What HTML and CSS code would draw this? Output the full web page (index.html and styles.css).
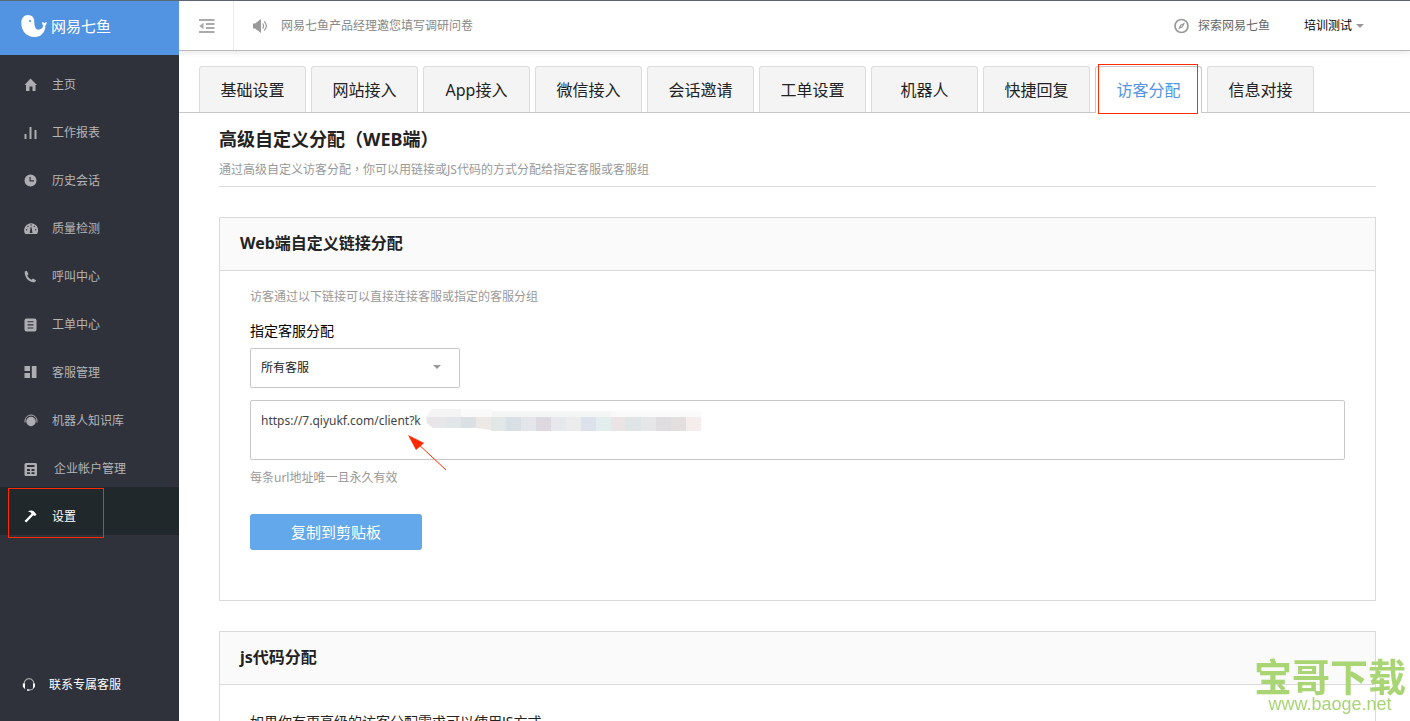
FILE: index.html
```html
<!DOCTYPE html>
<html lang="zh-CN">
<head>
<meta charset="utf-8">
<title>网易七鱼 - 访客分配</title>
<link rel="stylesheet" href="styles.css">
</head>
<body>
<div class="app">
  <aside class="sidebar">
    <a class="logo" href="#">
      <svg width="26" height="24" viewBox="0 0 26 24"><path fill="#fff" d="M7 1C11 1 13.300 3.800 13.300 7.500C13.300 11.500 14 15.700 17.500 15.700C20 15.700 21.800 14 22.300 11.600C21.200 10.700 20.900 9.300 21.300 8C22.400 8.200 23 8.600 23.500 9.200C24 8.400 24.700 8.100 25.500 8C25.800 9.600 25.300 11 24.300 11.700C24.600 18 20 23 13.500 23C6 23 0.300 17.500 0.300 9C0.300 4.300 3 1 7 1Z"/><circle cx="9" cy="7" r="1.100" fill="#5294e2"/></svg>
      <span>网易七鱼</span>
    </a>
    <nav class="menu">
      <a class="menu-item" href="#"><svg viewBox="0 0 14 14"><path d="M6.500 0.500L13 7H11.500V13H8.500V8.500H5.500V13H2V7H0.500Z"/></svg>主页</a>
      <a class="menu-item" href="#"><svg viewBox="0 0 14 14"><path d="M0.500 8H2.500V13H0.500ZM5.500 1H7.500V13H5.500ZM10.500 4H12.500V13H10.500Z"/></svg>工作报表</a>
      <a class="menu-item" href="#"><svg viewBox="0 0 14 14"><path fill-rule="evenodd" d="M6.500 0.500A6 6 0 1 1 6.500 12.500A6 6 0 1 1 6.500 0.500ZM5.500 3V7.500H10V6.300H6.700V3Z"/></svg>历史会话</a>
      <a class="menu-item" href="#"><svg viewBox="0 0 14 14"><path d="M1.200 12A7 7 0 1 1 13 12Z"/><path class="cut" d="M6.700 5H7.500L8.500 11H5.700Z"/><circle class="cut" cx="7.100" cy="3" r="0.700"/><circle class="cut" cx="4" cy="4.400" r="0.700"/><circle class="cut" cx="10.200" cy="4.400" r="0.700"/><circle class="cut" cx="2.500" cy="7.800" r="0.700"/><circle class="cut" cx="11.700" cy="7.800" r="0.700"/></svg>质量检测</a>
      <a class="menu-item" href="#"><svg viewBox="0 0 14 14"><path d="M0.700 1.500L2.800 0.700L4.500 4L3.300 5.600C4.200 7.500 5.500 8.800 7.500 9.800L9 8.500L12 10.300C11.800 12 10.500 12.500 9 12.300C4 11.500 0.500 7 0.700 1.500Z"/></svg>呼叫中心</a>
      <a class="menu-item" href="#"><svg viewBox="0 0 14 14"><rect x="0.500" y="0.500" width="12" height="13" rx="2"/><path class="cut" d="M3.500 3.200H9.500V4.300H3.500ZM3.500 6.300H9.500V7.400H3.500ZM3.500 9.400H9.500V10.500H3.500Z"/></svg>工单中心</a>
      <a class="menu-item" href="#"><svg viewBox="0 0 14 14"><path d="M0.500 0H6V5H0.500ZM0.500 7H6V12H0.500ZM7.800 0H12.500V12H7.800Z"/></svg>客服管理</a>
      <a class="menu-item" href="#"><svg viewBox="0 0 14 14"><circle cx="7" cy="7.500" r="4.700"/><path class="line" d="M1 8.500V7A6 6 0 0 1 13 7V8.500"/></svg>机器人知识库</a>
      <a class="menu-item wide" href="#"><svg viewBox="0 0 14 14"><rect x="0.500" y="1" width="12.500" height="13" rx="1.500"/><path class="cut" d="M3 3H10.500V5H3ZM3 7H6V9H3ZM7.500 7H10.500V9H7.500ZM3 10.300H6V12H3ZM7.500 10.300H10.500V12H7.500Z"/></svg>企业帐户管理</a>
      <a class="menu-item active" href="#"><svg viewBox="0 0 14 14"><path d="M4 1.500C6 0 8.500 0.200 10 1.600L12.500 4.500L11 6L9.300 5.200L2.300 12.500L0.500 11L7.500 3.800L6.500 2.300Z"/></svg>设置<span class="mark mark-menu"></span></a>
    </nav>
    <a class="contact" href="#"><svg viewBox="0 0 14 14"><path d="M2.200 6V5.500A4.800 4.800 0 0 1 11.800 5.500V6M11.800 9C11.500 10.500 10.500 12 7.500 12M2 9L3 11" fill="none" stroke="#a9abad" stroke-width="1.200"/><path d="M0.800 5.500H3V10H2L0.800 8.500ZM11 5.500H13V8.500L12 10H11ZM5 11.300H7.500V12.700H5Z" fill="#fff"/></svg>联系专属客服</a>
  </aside>

  <div class="main">
    <header class="topbar">
      <button class="toggle" type="button" aria-label="收起菜单"><svg width="16" height="14" viewBox="0 0 16 14"><path fill="#aaa" d="M0 0H15.500V2H0ZM7 4H15.500V6H7ZM7 8H15.500V10H7ZM0 12H15.500V14H0ZM4.500 3.800V10.200L0.300 7Z"/></svg></button>
      <a class="notice" href="#"><svg width="16" height="14" viewBox="0 0 16 14"><path fill="#999" d="M0 4.500H2L8 0V14L2 9.500H0Z"/><path fill="none" stroke="#999" stroke-width="1.200" d="M9.700 4.500Q11.300 7 9.700 9.500M11.300 2.500Q15.500 7 11.300 11.500"/></svg>网易七鱼产品经理邀您填写调研问卷</a>
      <a class="explore" href="#"><svg width="16" height="16" viewBox="0 0 16 16"><circle cx="7.500" cy="8" r="6.500" fill="none" stroke="#999" stroke-width="1.700"/><path fill="#999" fill-rule="evenodd" d="M11 4.500L8.700 9.200L4 11.500L6.300 6.800ZM7.500 7.200L6.700 8L7.500 8.800L8.300 8Z"/></svg>探索网易七鱼</a>
      <button class="account" type="button">培训测试<span class="caret"></span></button>
    </header>

    <nav class="tabs">
      <a class="tab" href="#">基础设置</a>
      <a class="tab" href="#">网站接入</a>
      <a class="tab" href="#">App接入</a>
      <a class="tab" href="#">微信接入</a>
      <a class="tab" href="#">会话邀请</a>
      <a class="tab" href="#">工单设置</a>
      <a class="tab" href="#">机器人</a>
      <a class="tab" href="#">快捷回复</a>
      <a class="tab current" href="#">访客分配<span class="mark mark-tab"></span></a>
      <a class="tab" href="#">信息对接</a>
    </nav>

    <main class="content">
      <div class="page-head">
        <h1>高级自定义分配<span class="punct" lang="zh-TW">（</span>WEB端<span class="punct" lang="zh-TW">）</span></h1>
        <p>通过高级自定义访客分配<span class="punct" lang="zh-TW">，</span>你可以用链接或JS代码的方式分配给指定客服或客服组</p>
      </div>

      <section class="card">
        <h2>Web端自定义链接分配</h2>
        <div class="card-body">
          <p class="muted">访客通过以下链接可以直接连接客服或指定的客服分组</p>
          <label class="field-label" for="agent">指定客服分配</label>
          <div class="select">
            <select id="agent"><option>所有客服</option></select>
            <span class="caret"></span>
          </div>
          <div class="url-box">
            <textarea aria-label="链接地址" readonly>https://7.qiyukf.com/client?k</textarea>
            <svg class="mosaic" width="277" height="24" viewBox="0 0 277 24">
              <path fill="#f4f4f4" d="M6 1H35V9H0Z"/><path fill="#fbfafa" d="M35 1H66V9H35Z"/><path fill="#f4f5f5" d="M66 3H185V9H66Z"/><path fill="#fafafb" d="M185 3H275V9H185Z"/>
              <path fill="#e8e6e8" d="M0 9H20V20H7L1 15Z"/>
              <path fill="#e1e6e9" d="M20 9H35V20H20Z"/><path fill="#dae1e4" d="M35 9H50V20H35Z"/><path fill="#ece8e5" d="M50 9H65V22L50 20Z"/>
              <path fill="#e1e6e6" d="M65 9H80V23H65Z"/><path fill="#d9e0e5" d="M80 9H95V23H80Z"/><path fill="#e3e5e8" d="M95 9H110V23H95Z"/><path fill="#ded9de" d="M110 9H125V23H110Z"/><path fill="#e7e8eb" d="M125 9H140V23H125Z"/><path fill="#ececef" d="M140 9H155V23H140Z"/><path fill="#dce1eb" d="M155 9H170V23H155Z"/><path fill="#e3eded" d="M170 9H185V23H170Z"/><path fill="#ebe4e5" d="M185 9H200V23H185Z"/><path fill="#dfe5e6" d="M200 9H215V23H200Z"/><path fill="#e6e6e8" d="M215 9H230V23H215Z"/><path fill="#dfdddf" d="M230 9H245V23H230Z"/><path fill="#e3dfde" d="M245 9H260V23H245Z"/><path fill="#f4edeb" d="M260 9H275V23H260Z"/>
            </svg>
            <svg class="arrow" width="40" height="36" viewBox="0 0 40 36"><path stroke="#ff2a00" d="M8 7L38 35"/><path fill="#ff2a00" d="M0 0L16 8L8 15Z"/></svg>
          </div>
          <p class="muted hint">每条url地址唯一且永久有效</p>
          <button class="copy" type="button">复制到剪贴板</button>
        </div>
      </section>

      <section class="card">
        <h2>js代码分配</h2>
        <div class="card-body lead">
          <p>如果你有更高级的访客分配需求可以使用JS方式</p>
        </div>
      </section>
    </main>
  </div>
</div>
<div class="watermark"><strong>宝哥下载</strong><span>www.baoge.net</span></div>
</body>
</html>
```
FILE: styles.css
```css
* { box-sizing: border-box; }

body {
  margin: 0;
  font: 12px/20px "Noto Sans", "Noto Sans CJK SC", sans-serif;
  color: #222;
  background: #fff;
  overflow: hidden;
}

a { color: inherit; text-decoration: none; }
h1, h2, p { margin: 0; }
button, select, textarea { font: inherit; color: inherit; }
button { border: 0; background: none; padding: 0; cursor: pointer; }
svg { display: block; flex: none; }

.app {
  display: grid;
  grid-template-columns: 179px 1fr;
  height: 100vh;
  border-top: 1px solid #5b6675;
}

/* Sidebar */
.sidebar {
  display: flex;
  flex-direction: column;
  background: #2f323b;
  color: #b4b5b8;
}

.logo {
  display: flex;
  align-items: center;
  gap: 4px;
  height: 54px;
  padding: 0 0 4px 21px;
  background: #5294e2;
  color: #fff;
  font-size: 15px;
}

.menu-item {
  position: relative;
  display: flex;
  align-items: center;
  gap: 14px;
  height: 48px;
  padding: 11px 0 0 24px;
}

.menu-item svg, .contact svg { width: 14px; height: 14px; }
.menu-item svg { fill: #adaeb1; }
.menu-item .cut { fill: #2f323b; }
.menu-item .line { fill: none; stroke: #adaeb1; }
.menu-item.wide { gap: 16px; }
.menu-item.active { background: #20282c; color: #fff; }
.menu-item.active svg { fill: #fff; }

.contact {
  display: flex;
  align-items: center;
  gap: 13px;
  margin-top: auto;
  padding: 0 0 26px 22px;
  color: #fff;
}

/* Red annotation frames */
.mark { position: absolute; border: 1px solid #ff2a00; }
.mark-menu { left: 8px; top: 1px; width: 96px; height: 50px; }
.mark-tab { left: 2px; top: -3px; width: 100px; height: 50px; }

/* Top bar */
.main { min-width: 0; overflow: hidden; }

.topbar {
  display: flex;
  align-items: center;
  height: 50px;
  padding-right: 46px;
  border-bottom: 1px solid #b9b9b9;
  box-shadow: 0 2px 6px #e9e9e9;
}

.toggle {
  display: flex;
  align-items: center;
  align-self: stretch;
  width: 55px;
  padding-left: 20px;
  border-right: 1px solid #ebebeb;
}

.notice {
  display: flex;
  align-items: center;
  gap: 12px;
  margin-left: 19px;
  color: #888;
}

.explore {
  display: flex;
  align-items: center;
  gap: 8px;
  margin-left: auto;
  color: #666;
}

.account {
  display: flex;
  align-items: center;
  gap: 4px;
  margin-left: 34px;
  color: #000;
}

.caret {
  border: 4px solid transparent;
  border-top-color: #999;
  border-bottom: 0;
}

/* Tabs */
.tabs {
  display: flex;
  gap: 5px;
  padding: 15px 0 0 20px;
  border-bottom: 1px solid #c8c8c8;
}

.tab {
  position: relative;
  width: 107px;
  height: 46px;
  border: 1px solid #dcdcdc;
  border-bottom: 0;
  border-radius: 3px 3px 0 0;
  background: #f4f4f4;
  font-size: 16px;
  line-height: 46px;
  text-align: center;
}

.tab.current {
  height: 47px;
  margin-bottom: -1px;
  border-color: #c8c8c8;
  background: #fff;
  color: #5294e2;
}

/* Content */
.content { padding: 14px 34px 0 40px; }

.page-head {
  padding-bottom: 6px;
  border-bottom: 1px solid #dcdcdc;
  color: #999;
}

.page-head h1 {
  margin-bottom: 9px;
  color: #222;
  font-size: 18px;
  line-height: 24px;
}

.punct { font-family: "Noto Sans CJK TC", sans-serif; line-height: 1; }

.card { margin-top: 30px; border: 1px solid #d9dadc; }

.card h2 {
  padding: 0 20px 2px;
  border-bottom: 1px solid #d9dadc;
  background: #fafafa;
  font-size: 16px;
  line-height: 50px;
}

.card-body { padding: 16px 30px 50px; }
.card-body.lead { padding-top: 27px; font-size: 14px; }
.muted { color: #999; }

.field-label {
  display: block;
  margin: 14px 0 7px;
  color: #000;
  font-size: 14px;
}

.select { position: relative; width: 210px; }

.select select {
  display: block;
  width: 100%;
  height: 40px;
  padding: 0 10px;
  border: 1px solid #c8c8c8;
  border-radius: 2px;
  background: #fff;
  appearance: none;
}

.select .caret { position: absolute; right: 19px; top: 17px; }

.url-box { position: relative; margin: 12px 0 8px; }

.url-box textarea {
  display: block;
  width: 100%;
  height: 60px;
  padding: 10px;
  border: 1px solid #c8c8c8;
  border-radius: 2px;
  color: #444;
  resize: none;
}

.mosaic { position: absolute; left: 176px; top: 8px; }
.arrow { position: absolute; left: 158px; top: 35px; }

.copy {
  display: block;
  width: 172px;
  height: 36px;
  margin-top: 26px;
  border-radius: 3px;
  background: #62a8ea;
  color: #fff;
  font-size: 15px;
}

/* Site watermark */
.watermark {
  position: fixed;
  right: 4px;
  bottom: 7px;
  display: flex;
  flex-direction: column;
  align-items: center;
  color: #a9d574;
}

.watermark strong {
  font-size: 38px;
  line-height: 36px;
}

.watermark span {
  font: 18px/20px "Liberation Sans", sans-serif;
}
```
